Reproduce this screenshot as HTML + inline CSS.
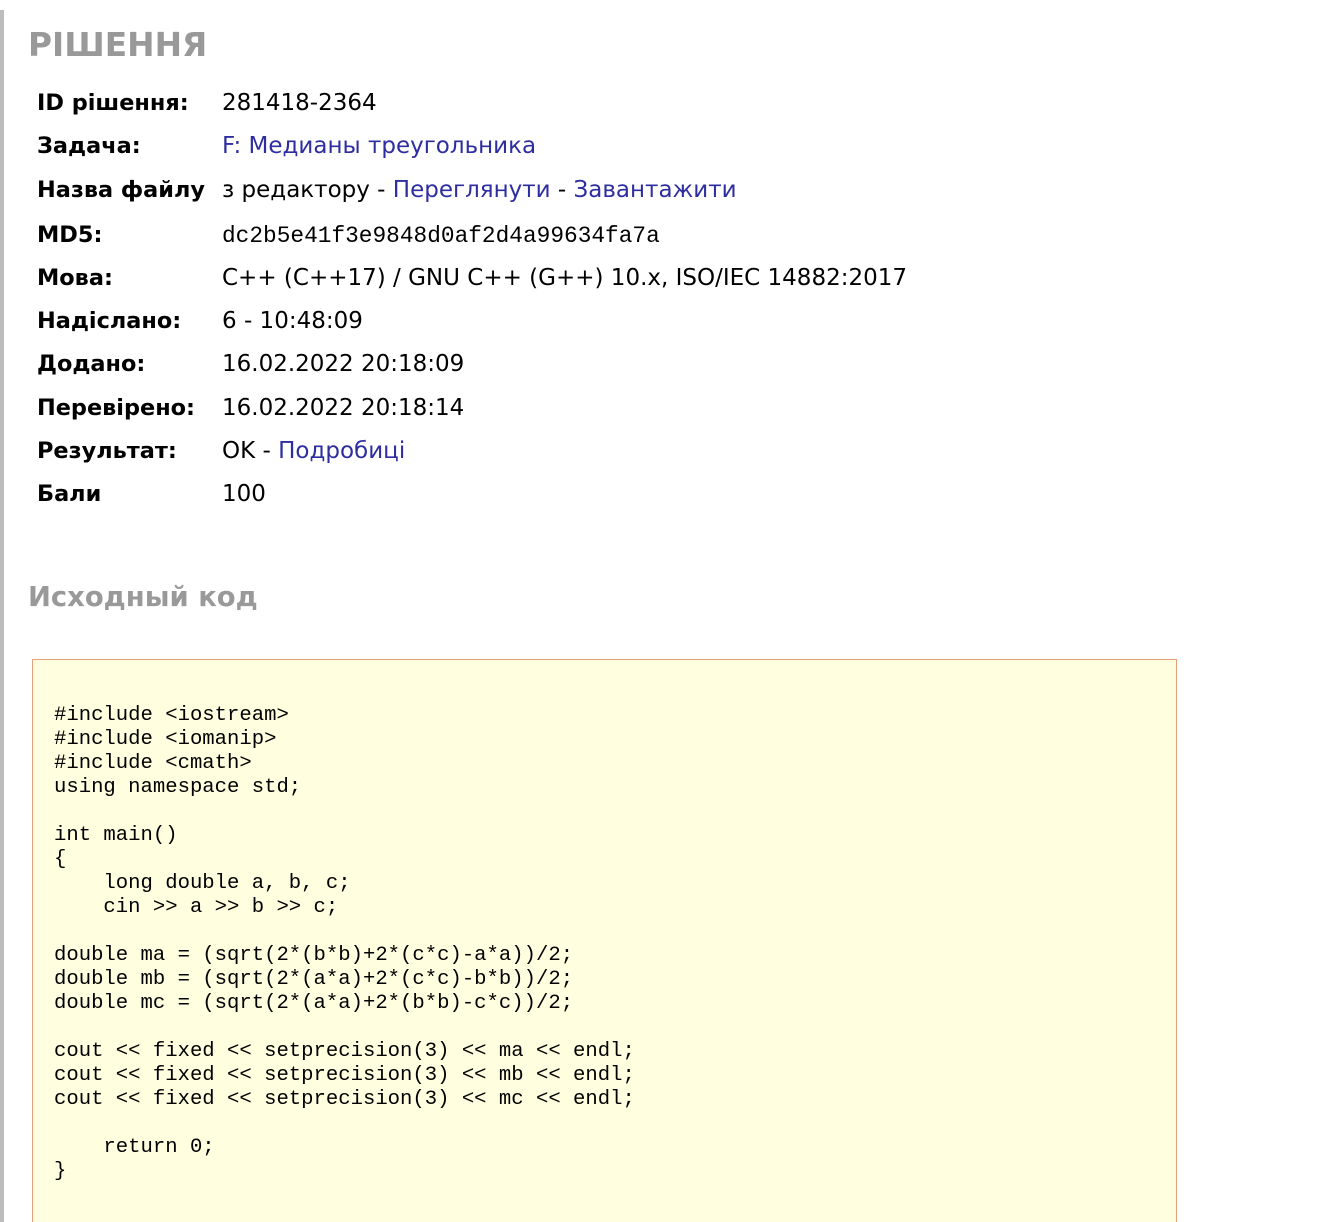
<!DOCTYPE html>
<html style="height:1222px;overflow:hidden"><head><meta charset="utf-8"><style>
body{margin:0;width:1342px;height:1222px;overflow:hidden;background:#fff;position:relative;font-family:"DejaVu Sans","Liberation Sans",sans-serif;}
.bar{position:absolute;left:0;top:10px;width:4px;height:1212px;background:#bdbdbd;}
h1{position:absolute;left:28px;top:22px;margin:0;font-size:32.8px;font-weight:bold;color:#999;line-height:46px;}
h2{position:absolute;left:28px;top:578px;margin:0;font-size:27.4px;font-weight:bold;color:#999;line-height:40px}
.r{position:absolute;left:37px;height:44px;line-height:44px;font-size:23px;color:#000;white-space:nowrap}
.r b{display:inline-block;width:185px;font-size:22.4px}
a{color:#2e2ea0;text-decoration:none}
.md5{font-family:"Liberation Mono",monospace;font-size:22.8px}
.code{position:absolute;left:32px;top:659px;width:1143px;height:600px;background:#ffffe0;border:1px solid #e8a07a;}
pre{margin:0;position:absolute;left:21px;top:44px;font-family:"Liberation Mono",monospace;font-size:20.6px;line-height:24px;color:#000}
</style></head><body>
<div class="bar"></div>
<h1>РІШЕННЯ</h1>
<div class="r" style="top:81px"><b>ID рішення:</b>281418-2364</div>
<div class="r" style="top:124px"><b>Задача:</b><a>F: Медианы треугольника</a></div>
<div class="r" style="top:168px"><b>Назва файлу</b>з редактору - <a>Переглянути</a> - <a>Завантажити</a></div>
<div class="r" style="top:213px"><b>MD5:</b><span class="md5">dc2b5e41f3e9848d0af2d4a99634fa7a</span></div>
<div class="r" style="top:256px"><b>Мова:</b>C++ (C++17) / GNU C++ (G++) 10.x, ISO/IEC 14882:2017</div>
<div class="r" style="top:299px"><b>Надіслано:</b>6 - 10:48:09</div>
<div class="r" style="top:342px"><b>Додано:</b>16.02.2022 20:18:09</div>
<div class="r" style="top:386px"><b>Перевірено:</b>16.02.2022 20:18:14</div>
<div class="r" style="top:429px"><b>Результат:</b>OK - <a>Подробиці</a></div>
<div class="r" style="top:472px"><b>Бали</b>100</div>
<h2>Исходный код</h2>
<div class="code"><pre>#include &lt;iostream&gt;
#include &lt;iomanip&gt;
#include &lt;cmath&gt;
using namespace std;

int main()
{
    long double a, b, c;
    cin &gt;&gt; a &gt;&gt; b &gt;&gt; c;

double ma = (sqrt(2*(b*b)+2*(c*c)-a*a))/2;
double mb = (sqrt(2*(a*a)+2*(c*c)-b*b))/2;
double mc = (sqrt(2*(a*a)+2*(b*b)-c*c))/2;

cout &lt;&lt; fixed &lt;&lt; setprecision(3) &lt;&lt; ma &lt;&lt; endl;
cout &lt;&lt; fixed &lt;&lt; setprecision(3) &lt;&lt; mb &lt;&lt; endl;
cout &lt;&lt; fixed &lt;&lt; setprecision(3) &lt;&lt; mc &lt;&lt; endl;

    return 0;
}</pre></div>
</body></html>
